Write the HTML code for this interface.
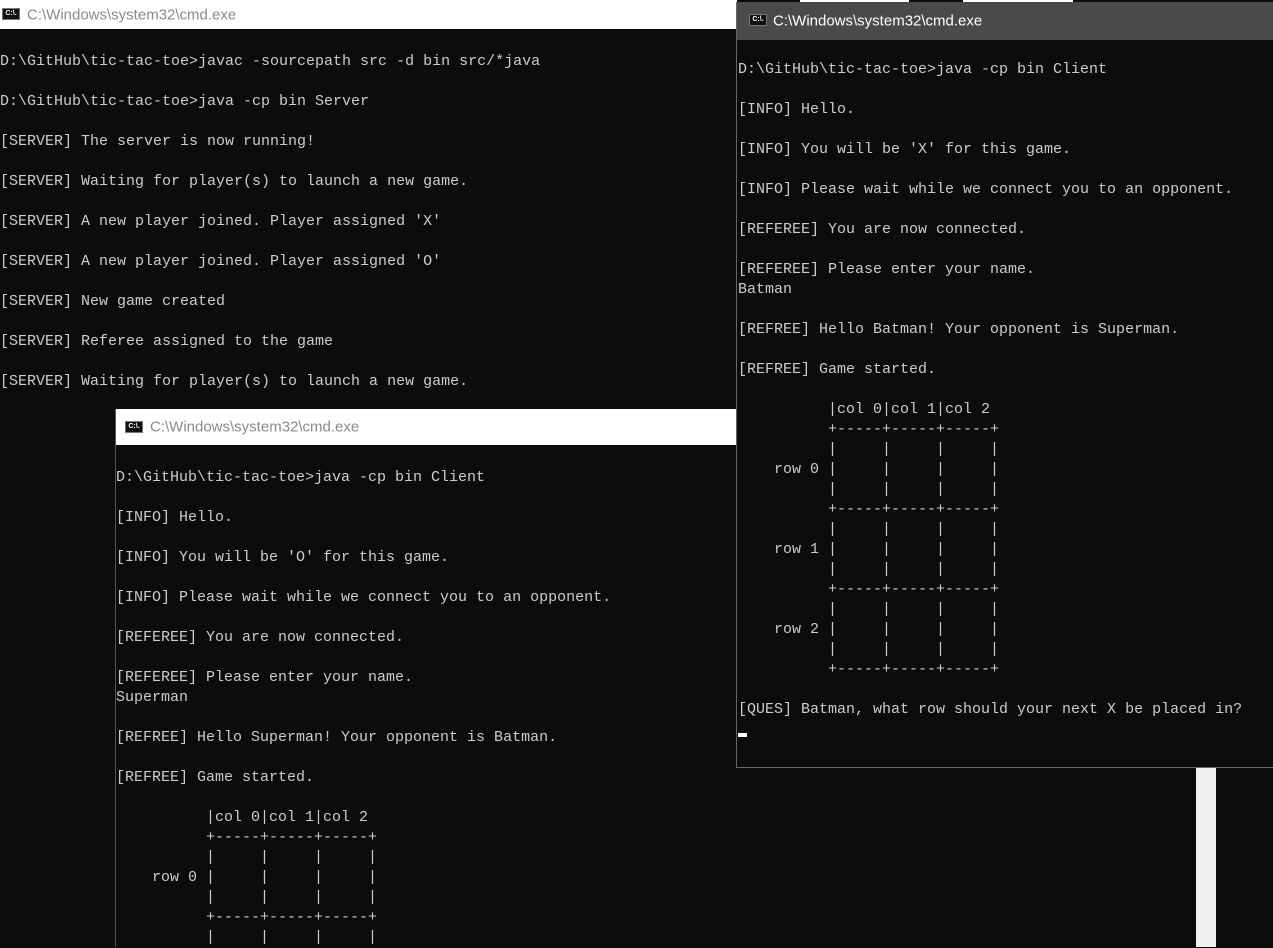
<!DOCTYPE html>
<html><head><style>
body{margin:0;width:1273px;height:947px;background:#0c0c0c;position:relative;overflow:hidden}
.w{position:absolute;background:#0c0c0c}
.t{position:absolute;left:0;right:0;top:0;background:#fff;color:#8a8a8a;font:15px "Liberation Sans",sans-serif}
.t span{position:absolute;top:50%;transform:translateY(-50%)}
.ic{position:absolute;width:18px;height:12px;background:#111;border:1px solid #777;box-sizing:border-box;color:#fff;font:bold 7px "Liberation Sans",sans-serif;line-height:10px;text-align:center}
pre{position:absolute;margin:0;font:15px "Liberation Mono",monospace;line-height:20px;color:#cccccc}
</style></head><body>
<div class="w" style="left:0;top:0;width:737px;height:410px">
<div class="t" style="height:29px"><div class="ic" style="left:2px;top:8px">C:\.</div><span style="left:27px">C:\Windows\system32\cmd.exe</span></div>
<pre style="left:0;top:52px">D:\GitHub\tic-tac-toe>javac -sourcepath src -d bin src/*java

D:\GitHub\tic-tac-toe>java -cp bin Server

[SERVER] The server is now running!

[SERVER] Waiting for player(s) to launch a new game.

[SERVER] A new player joined. Player assigned 'X'

[SERVER] A new player joined. Player assigned 'O'

[SERVER] New game created

[SERVER] Referee assigned to the game

[SERVER] Waiting for player(s) to launch a new game.</pre>
</div>
<div style="position:absolute;left:1195px;top:768px;width:21px;height:179px;background:#f0f0f0"></div>
<div class="w" style="left:115px;top:409px;width:1080px;height:538px;border-left:1px solid #555">
<div class="t" style="height:36px"><div class="ic" style="left:9px;top:12px">C:\.</div><span style="left:34px">C:\Windows\system32\cmd.exe</span></div>
<pre style="left:0;top:59px">D:\GitHub\tic-tac-toe>java -cp bin Client

[INFO] Hello.

[INFO] You will be 'O' for this game.

[INFO] Please wait while we connect you to an opponent.

[REFEREE] You are now connected.

[REFEREE] Please enter your name.
Superman

[REFREE] Hello Superman! Your opponent is Batman.

[REFREE] Game started.

          |col 0|col 1|col 2
          +-----+-----+-----+
          |     |     |     |
    row 0 |     |     |     |
          |     |     |     |
          +-----+-----+-----+
          |     |     |     |</pre>
</div>
<div style="position:absolute;left:800px;top:0;width:109px;height:2px;background:#fff"></div>
<div style="position:absolute;left:963px;top:0;width:110px;height:2px;background:#fff"></div>
<div class="w" style="left:736px;top:2px;width:537px;height:765px;border-left:1px solid #666;border-bottom:1px solid #666">
<div class="t" style="height:38px;background:#4b4a48;color:#fff"><div class="ic" style="left:12px;top:12px">C:\.</div><span style="left:36px">C:\Windows\system32\cmd.exe</span></div>
<pre style="left:1px;top:58px">D:\GitHub\tic-tac-toe>java -cp bin Client

[INFO] Hello.

[INFO] You will be 'X' for this game.

[INFO] Please wait while we connect you to an opponent.

[REFEREE] You are now connected.

[REFEREE] Please enter your name.
Batman

[REFREE] Hello Batman! Your opponent is Superman.

[REFREE] Game started.

          |col 0|col 1|col 2
          +-----+-----+-----+
          |     |     |     |
    row 0 |     |     |     |
          |     |     |     |
          +-----+-----+-----+
          |     |     |     |
    row 1 |     |     |     |
          |     |     |     |
          +-----+-----+-----+
          |     |     |     |
    row 2 |     |     |     |
          |     |     |     |
          +-----+-----+-----+

[QUES] Batman, what row should your next X be placed in?</pre>
<div style="position:absolute;left:1px;top:731px;width:9px;height:4px;background:#fff"></div>
</div>
</body></html>
